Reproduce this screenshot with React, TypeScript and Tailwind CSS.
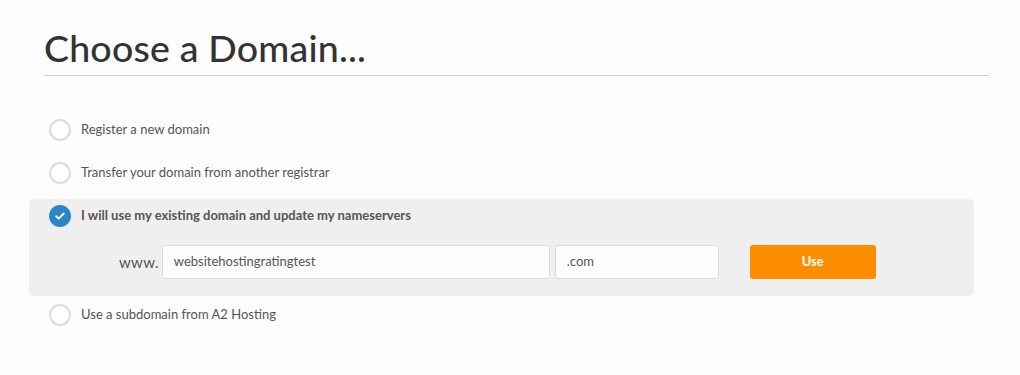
import React from "react";

type Option = {
  id: string;
  label: string;
};

const options: Option[] = [
  { id: "register", label: "Register a new domain" },
  { id: "transfer", label: "Transfer your domain from another registrar" },
  { id: "owndomain", label: "I will use my existing domain and update my nameservers" },
  { id: "subdomain", label: "Use a subdomain from A2 Hosting" },
];

function Radio({ checked }: { checked: boolean }) {
  if (checked) {
    return (
      <span className="flex h-[22px] w-[22px] shrink-0 items-center justify-center rounded-full bg-[#2a86c8]">
        <svg width="12" height="12" viewBox="0 0 12 12" fill="none">
          <path
            d="M2.2 6.2l2.5 2.4 5-5"
            stroke="white"
            strokeWidth="2"
            strokeLinecap="round"
            strokeLinejoin="round"
          />
        </svg>
      </span>
    );
  }
  return (
    <span className="h-[22px] w-[22px] shrink-0 rounded-full border-2 border-[#dcdcdc] bg-white" />
  );
}

export default function App() {
  const selected = "owndomain";

  return (
    <div className="min-h-[375px] w-[1020px] bg-[#fdfdfd] font-['Lato','Open_Sans',sans-serif] text-[#555]">
      <div className="pl-[44px] pr-[31px] pt-[26px]">
        <h1 className="border-b border-[#cfcfcf] pb-[5px] font-['Lato',sans-serif] text-[37.5px] font-medium leading-[44px] tracking-[0.2px] text-[#333]">
          Choose a Domain...
        </h1>
      </div>

      <div className="mt-[35px] flex flex-col pl-[29px] pr-[46px]">
        {options.map((opt, i) => {
          const isSel = opt.id === selected;
          if (isSel) {
            return (
              <div
                key={opt.id}
                className="mt-[2px] rounded-[5px] bg-[#efefef] pb-[17px] pl-[20px] pt-[6px]"
              >
                <div className="flex items-center gap-[10px]">
                  <Radio checked />
                  <span className="text-[13px] font-bold text-[#555]">{opt.label}</span>
                </div>
                <div className="mt-[18px] flex items-center">
                  <span className="ml-[70px] mr-[3px] text-[15px] tracking-[0.3px] text-[#555]">
                    www.
                  </span>
                  <div className="flex h-[34px] w-[388px] items-center rounded-[3px] border border-[#dcdcdc] bg-[#fdfdfd] px-[11px] text-[13px] text-[#555]">
                    websitehostingratingtest
                  </div>
                  <div className="ml-[5px] flex h-[34px] w-[164px] items-center rounded-[3px] border border-[#dcdcdc] bg-[#fdfdfd] px-[11px] text-[13px] text-[#555]">
                    .com
                  </div>
                  <button className="ml-[31px] h-[34px] w-[126px] rounded-[3px] bg-[#ff8d00] text-[13px] font-bold text-white">
                    Use
                  </button>
                </div>
              </div>
            );
          }
          const afterBox = i > 0 && options[i - 1].id === selected;
          return (
            <div
              key={opt.id}
              className={
                afterBox
                  ? "flex h-[38px] items-center gap-[10px] pl-[20px]"
                  : "mb-[5px] flex h-[38px] items-center gap-[10px] pl-[20px]"
              }
            >
              <Radio checked={false} />
              <span className="text-[13px] text-[#555]">{opt.label}</span>
            </div>
          );
        })}
      </div>
    </div>
  );
}
